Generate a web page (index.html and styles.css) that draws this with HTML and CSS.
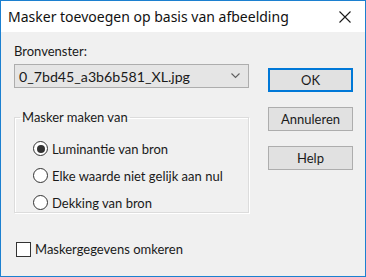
FILE: index.html
```html
<!DOCTYPE html>
<html lang="nl">
<head>
  <meta charset="UTF-8">
  <title>Masker toevoegen op basis van afbeelding</title>
  <link rel="stylesheet" href="styles.css">
</head>
<body>
  <div class="dialog">
    <div class="titlebar">
      <span class="title">Masker toevoegen op basis van afbeelding</span>
      <svg class="close" width="12" height="12" viewBox="0 0 12 12">
        <path d="M0.5 0.5 L11.5 11.5 M11.5 0.5 L0.5 11.5" stroke="#1a1a1a" stroke-width="1.1" fill="none"/>
      </svg>
    </div>

    <div class="content">
      <div class="left-col">
        <label class="field-label">Bronvenster:</label>
        <div class="combo">
          <span>0_7bd45_a3b6b581_XL.jpg</span>
          <svg width="9" height="6" viewBox="0 0 9 6">
            <path d="M0.5 0.5 L4.5 4.5 L8.5 0.5" stroke="#606060" stroke-width="1.1" fill="none"/>
          </svg>
        </div>

        <fieldset class="group">
          <legend>Masker maken van</legend>
          <div class="radio-row"><span class="radio checked"></span>Luminantie van bron</div>
          <div class="radio-row"><span class="radio"></span>Elke waarde niet gelijk aan nul</div>
          <div class="radio-row"><span class="radio"></span>Dekking van bron</div>
        </fieldset>

        <div class="check-row"><span class="checkbox"></span>Maskergegevens omkeren</div>
      </div>

      <div class="buttons">
        <button class="btn default">OK</button>
        <button class="btn">Annuleren</button>
        <button class="btn">Help</button>
      </div>
    </div>
  </div>
</body>
</html>
```

FILE: styles.css
```css
body {
  margin: 0;
  font-family: "Noto Sans", "Open Sans", sans-serif;
  color: #1a1a1a;
}

.dialog {
  width: 366px;
  height: 277px;
  box-sizing: border-box;
  border: 1px solid #1c80d0;
  background: #f0f0f0;
  display: flex;
  flex-direction: column;
}

.titlebar {
  height: 31px;
  background: #ffffff;
  display: flex;
  align-items: center;
  justify-content: space-between;
  padding: 0 14px 0 7px;
}

.title {
  font-size: 14px;
  color: #111;
}

.content {
  flex: 1;
  display: flex;
  padding: 11px 0 0 13px;
  font-family: Lato, "Noto Sans", sans-serif;
}

.left-col {
  width: 235px;
  display: flex;
  flex-direction: column;
}

.field-label {
  font-size: 13px;
  line-height: 16px;
  margin-bottom: 5px;
}

.combo {
  height: 24px;
  box-sizing: border-box;
  border: 1px solid #adadad;
  background: #e5e5e5;
  display: flex;
  align-items: center;
  justify-content: space-between;
  padding: 0 8px 0 4px;
  font-size: 14.2px;
}

.group {
  margin: 22px 0 0 0;
  padding: 11px 0 0 0;
  border: 1px solid #dcdcdc;
  box-shadow: inset 1px 1px 0 #ffffff, 1px 1px 0 #ffffff;
  height: 103px;
  box-sizing: border-box;
  min-width: 0;
}

.group legend {
  font-size: 13px;
  padding: 0 2px;
  margin-left: 5px;
  line-height: 14px;
}

.radio-row {
  display: flex;
  align-items: center;
  gap: 4px;
  font-size: 13px;
  height: 27px;
  padding-left: 18px;
}

.radio {
  width: 13px;
  height: 13px;
  border: 1px solid #333;
  border-radius: 50%;
  background: #fff;
  display: flex;
  align-items: center;
  justify-content: center;
}

.radio.checked::after {
  content: "";
  width: 8px;
  height: 8px;
  border-radius: 50%;
  background: #333;
}

.check-row {
  display: flex;
  align-items: center;
  gap: 4px;
  font-size: 13px;
  margin: 28px 0 0 2px;
}

.checkbox {
  width: 13px;
  height: 13px;
  border: 1px solid #333;
  background: #fff;
}

.buttons {
  display: flex;
  flex-direction: column;
  gap: 15px;
  margin: 25px 0 0 19px;
}

.btn {
  width: 85px;
  height: 24px;
  font-family: inherit;
  font-size: 13px;
  color: #1a1a1a;
  background: #e1e1e1;
  border: 1px solid #adadad;
  padding: 0;
}

.btn.default {
  border: 2px solid #0078d7;
}
```
